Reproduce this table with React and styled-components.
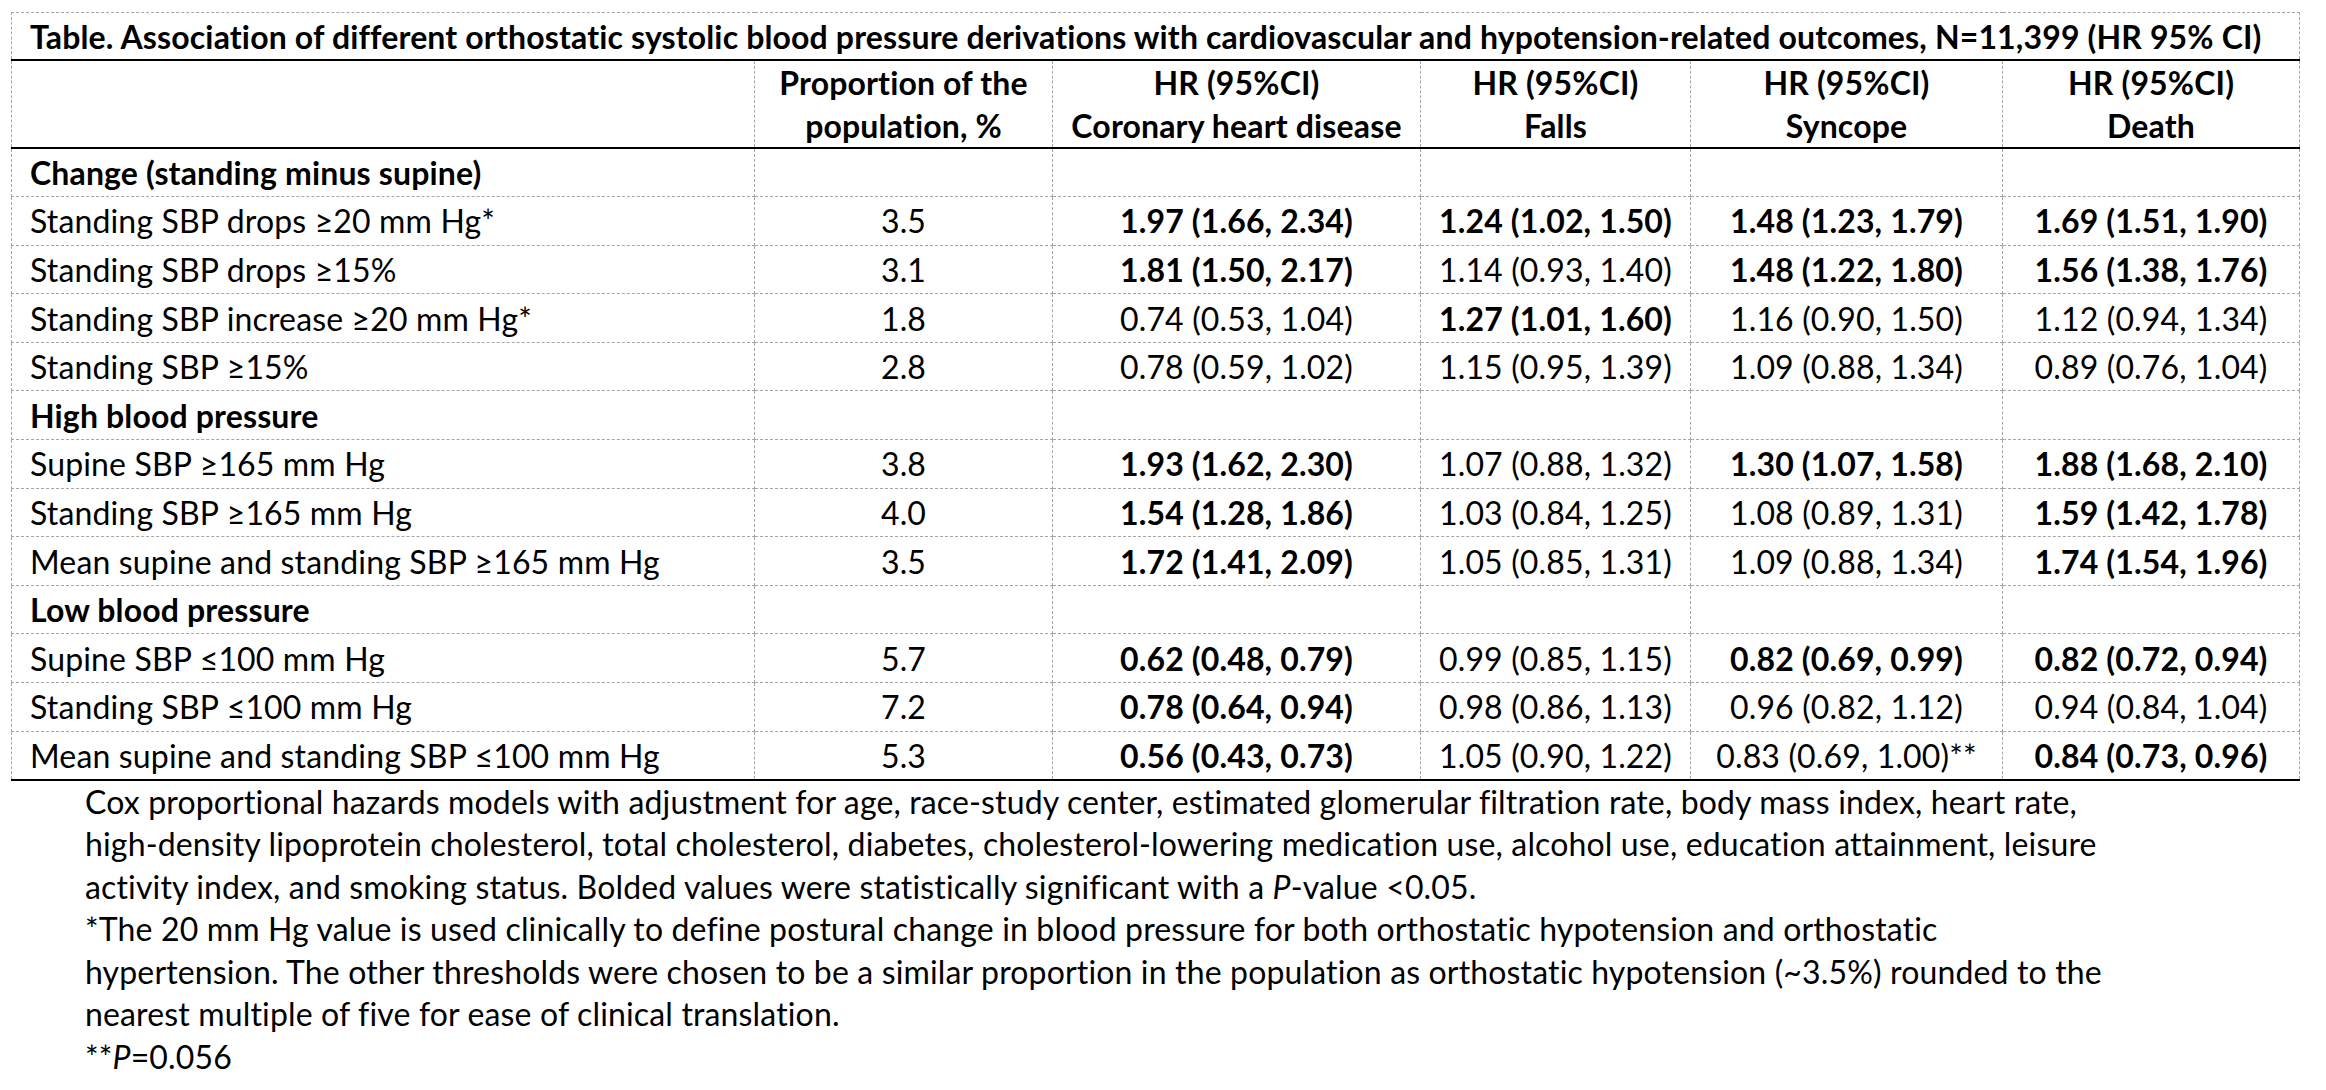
import styled, { createGlobalStyle } from "styled-components";

const rows = [
  { section: "Change (standing minus supine)" },
  {
    label: "Standing SBP drops ≥20 mm Hg*",
    pct: "3.5",
    hr: [
      ["1.97 (1.66, 2.34)", true],
      ["1.24 (1.02, 1.50)", true],
      ["1.48 (1.23, 1.79)", true],
      ["1.69 (1.51, 1.90)", true],
    ],
  },
  {
    label: "Standing SBP drops ≥15%",
    pct: "3.1",
    hr: [
      ["1.81 (1.50, 2.17)", true],
      ["1.14 (0.93, 1.40)", false],
      ["1.48 (1.22, 1.80)", true],
      ["1.56 (1.38, 1.76)", true],
    ],
  },
  {
    label: "Standing SBP increase ≥20 mm Hg*",
    pct: "1.8",
    hr: [
      ["0.74 (0.53, 1.04)", false],
      ["1.27 (1.01, 1.60)", true],
      ["1.16 (0.90, 1.50)", false],
      ["1.12 (0.94, 1.34)", false],
    ],
  },
  {
    label: "Standing SBP ≥15%",
    pct: "2.8",
    hr: [
      ["0.78 (0.59, 1.02)", false],
      ["1.15 (0.95, 1.39)", false],
      ["1.09 (0.88, 1.34)", false],
      ["0.89 (0.76, 1.04)", false],
    ],
  },
  { section: "High blood pressure" },
  {
    label: "Supine SBP ≥165 mm Hg",
    pct: "3.8",
    hr: [
      ["1.93 (1.62, 2.30)", true],
      ["1.07 (0.88, 1.32)", false],
      ["1.30 (1.07, 1.58)", true],
      ["1.88 (1.68, 2.10)", true],
    ],
  },
  {
    label: "Standing SBP ≥165 mm Hg",
    pct: "4.0",
    hr: [
      ["1.54 (1.28, 1.86)", true],
      ["1.03 (0.84, 1.25)", false],
      ["1.08 (0.89, 1.31)", false],
      ["1.59 (1.42, 1.78)", true],
    ],
  },
  {
    label: "Mean supine and standing SBP ≥165 mm Hg",
    pct: "3.5",
    hr: [
      ["1.72 (1.41, 2.09)", true],
      ["1.05 (0.85, 1.31)", false],
      ["1.09 (0.88, 1.34)", false],
      ["1.74 (1.54, 1.96)", true],
    ],
  },
  { section: "Low blood pressure" },
  {
    label: "Supine SBP ≤100 mm Hg",
    pct: "5.7",
    hr: [
      ["0.62 (0.48, 0.79)", true],
      ["0.99 (0.85, 1.15)", false],
      ["0.82 (0.69, 0.99)", true],
      ["0.82 (0.72, 0.94)", true],
    ],
  },
  {
    label: "Standing SBP ≤100 mm Hg",
    pct: "7.2",
    hr: [
      ["0.78 (0.64, 0.94)", true],
      ["0.98 (0.86, 1.13)", false],
      ["0.96 (0.82, 1.12)", false],
      ["0.94 (0.84, 1.04)", false],
    ],
  },
  {
    label: "Mean supine and standing SBP ≤100 mm Hg",
    pct: "5.3",
    hr: [
      ["0.56 (0.43, 0.73)", true],
      ["1.05 (0.90, 1.22)", false],
      ["0.83 (0.69, 1.00)**", false],
      ["0.84 (0.73, 0.96)", true],
    ],
  },
];

const outcomes = ["Coronary heart disease", "Falls", "Syncope", "Death"];
const colWidths = [743, 298, 368, 270, 312, 297];

const GlobalStyle = createGlobalStyle`
  body {
    margin: 0;
    background: #ffffff;
    color: #000000;
    font-family: Lato, "Open Sans", sans-serif;
  }
`;

const Page = styled.div`
  padding: 12px 0 0 11px;
  font-size: 32px;
  letter-spacing: 0.15px;
`;

const Table = styled.table`
  border-collapse: collapse;
  table-layout: fixed;
  width: 2288px;
  border: 1px dashed #a6a6a6;
  border-bottom: 2px solid #000;
`;

const TitleCell = styled.td`
  height: 46px;
  padding: 0 0 0 18px;
  font-weight: 700;
  text-align: left;
  white-space: nowrap;
  border-bottom: 2px solid #000;
  vertical-align: middle;
`;

const HeadCell = styled.th`
  height: 86px;
  padding: 0;
  font-weight: 700;
  line-height: 43px;
  text-align: center;
  white-space: nowrap;
  border: 1px dashed #a6a6a6;
  border-bottom: 2px solid #000;
  vertical-align: middle;
`;

const Row = styled.tr`
  height: 48.6px;
  &:last-child td {
    border-bottom: 2px solid #000;
  }
`;

const LabelCell = styled.td`
  padding: 0 0 0 18px;
  text-align: left;
  white-space: nowrap;
  font-weight: ${(p) => (p.$section ? 700 : 400)};
  border: 1px dashed #a6a6a6;
  vertical-align: middle;
`;

const Cell = styled.td`
  padding: 0;
  text-align: center;
  white-space: nowrap;
  font-weight: ${(p) => (p.$bold ? 700 : 400)};
  border: 1px dashed #a6a6a6;
  vertical-align: middle;
`;

const Notes = styled.div`
  padding-left: 74px;
  line-height: 42.5px;
  white-space: nowrap;
`;

const Note = styled.p`
  margin: 0;
`;

const App = () => {
  return (
    <>
      <GlobalStyle />
      <Page>
        <Table>
          <colgroup>
            {colWidths.map((w, i) => (
              <col key={i} style={{ width: w }} />
            ))}
          </colgroup>
          <thead>
            <tr>
              <TitleCell colSpan={6}>
                Table. Association of different orthostatic systolic blood
                pressure derivations with cardiovascular and
                hypotension-related outcomes, N=11,399 (HR 95% CI)
              </TitleCell>
            </tr>
            <tr>
              <HeadCell />
              <HeadCell>
                Proportion of the
                <br />
                population, %
              </HeadCell>
              {outcomes.map((o) => (
                <HeadCell key={o}>
                  HR (95%CI)
                  <br />
                  {o}
                </HeadCell>
              ))}
            </tr>
          </thead>
          <tbody>
            {rows.map((r, i) =>
              r.section ? (
                <Row key={i}>
                  <LabelCell $section>{r.section}</LabelCell>
                  <Cell />
                  <Cell />
                  <Cell />
                  <Cell />
                  <Cell />
                </Row>
              ) : (
                <Row key={i}>
                  <LabelCell>{r.label}</LabelCell>
                  <Cell>{r.pct}</Cell>
                  {r.hr.map(([v, b], j) => (
                    <Cell key={j} $bold={b}>
                      {v}
                    </Cell>
                  ))}
                </Row>
              )
            )}
          </tbody>
        </Table>
        <Notes>
          <Note>
            Cox proportional hazards models with adjustment for age, race-study
            center, estimated glomerular filtration rate, body mass index, heart
            rate,
            <br />
            high-density lipoprotein cholesterol, total cholesterol, diabetes,
            cholesterol-lowering medication use, alcohol use, education
            attainment, leisure
            <br />
            activity index, and smoking status. Bolded values were statistically
            significant with a <i>P</i>-value &lt;0.05.
          </Note>
          <Note>
            *The 20 mm Hg value is used clinically to define postural change in
            blood pressure for both orthostatic hypotension and orthostatic
            <br />
            hypertension. The other thresholds were chosen to be a similar
            proportion in the population as orthostatic hypotension (~3.5%)
            rounded to the
            <br />
            nearest multiple of five for ease of clinical translation.
          </Note>
          <Note>
            **<i>P</i>=0.056
          </Note>
        </Notes>
      </Page>
    </>
  );
};

export default App;
